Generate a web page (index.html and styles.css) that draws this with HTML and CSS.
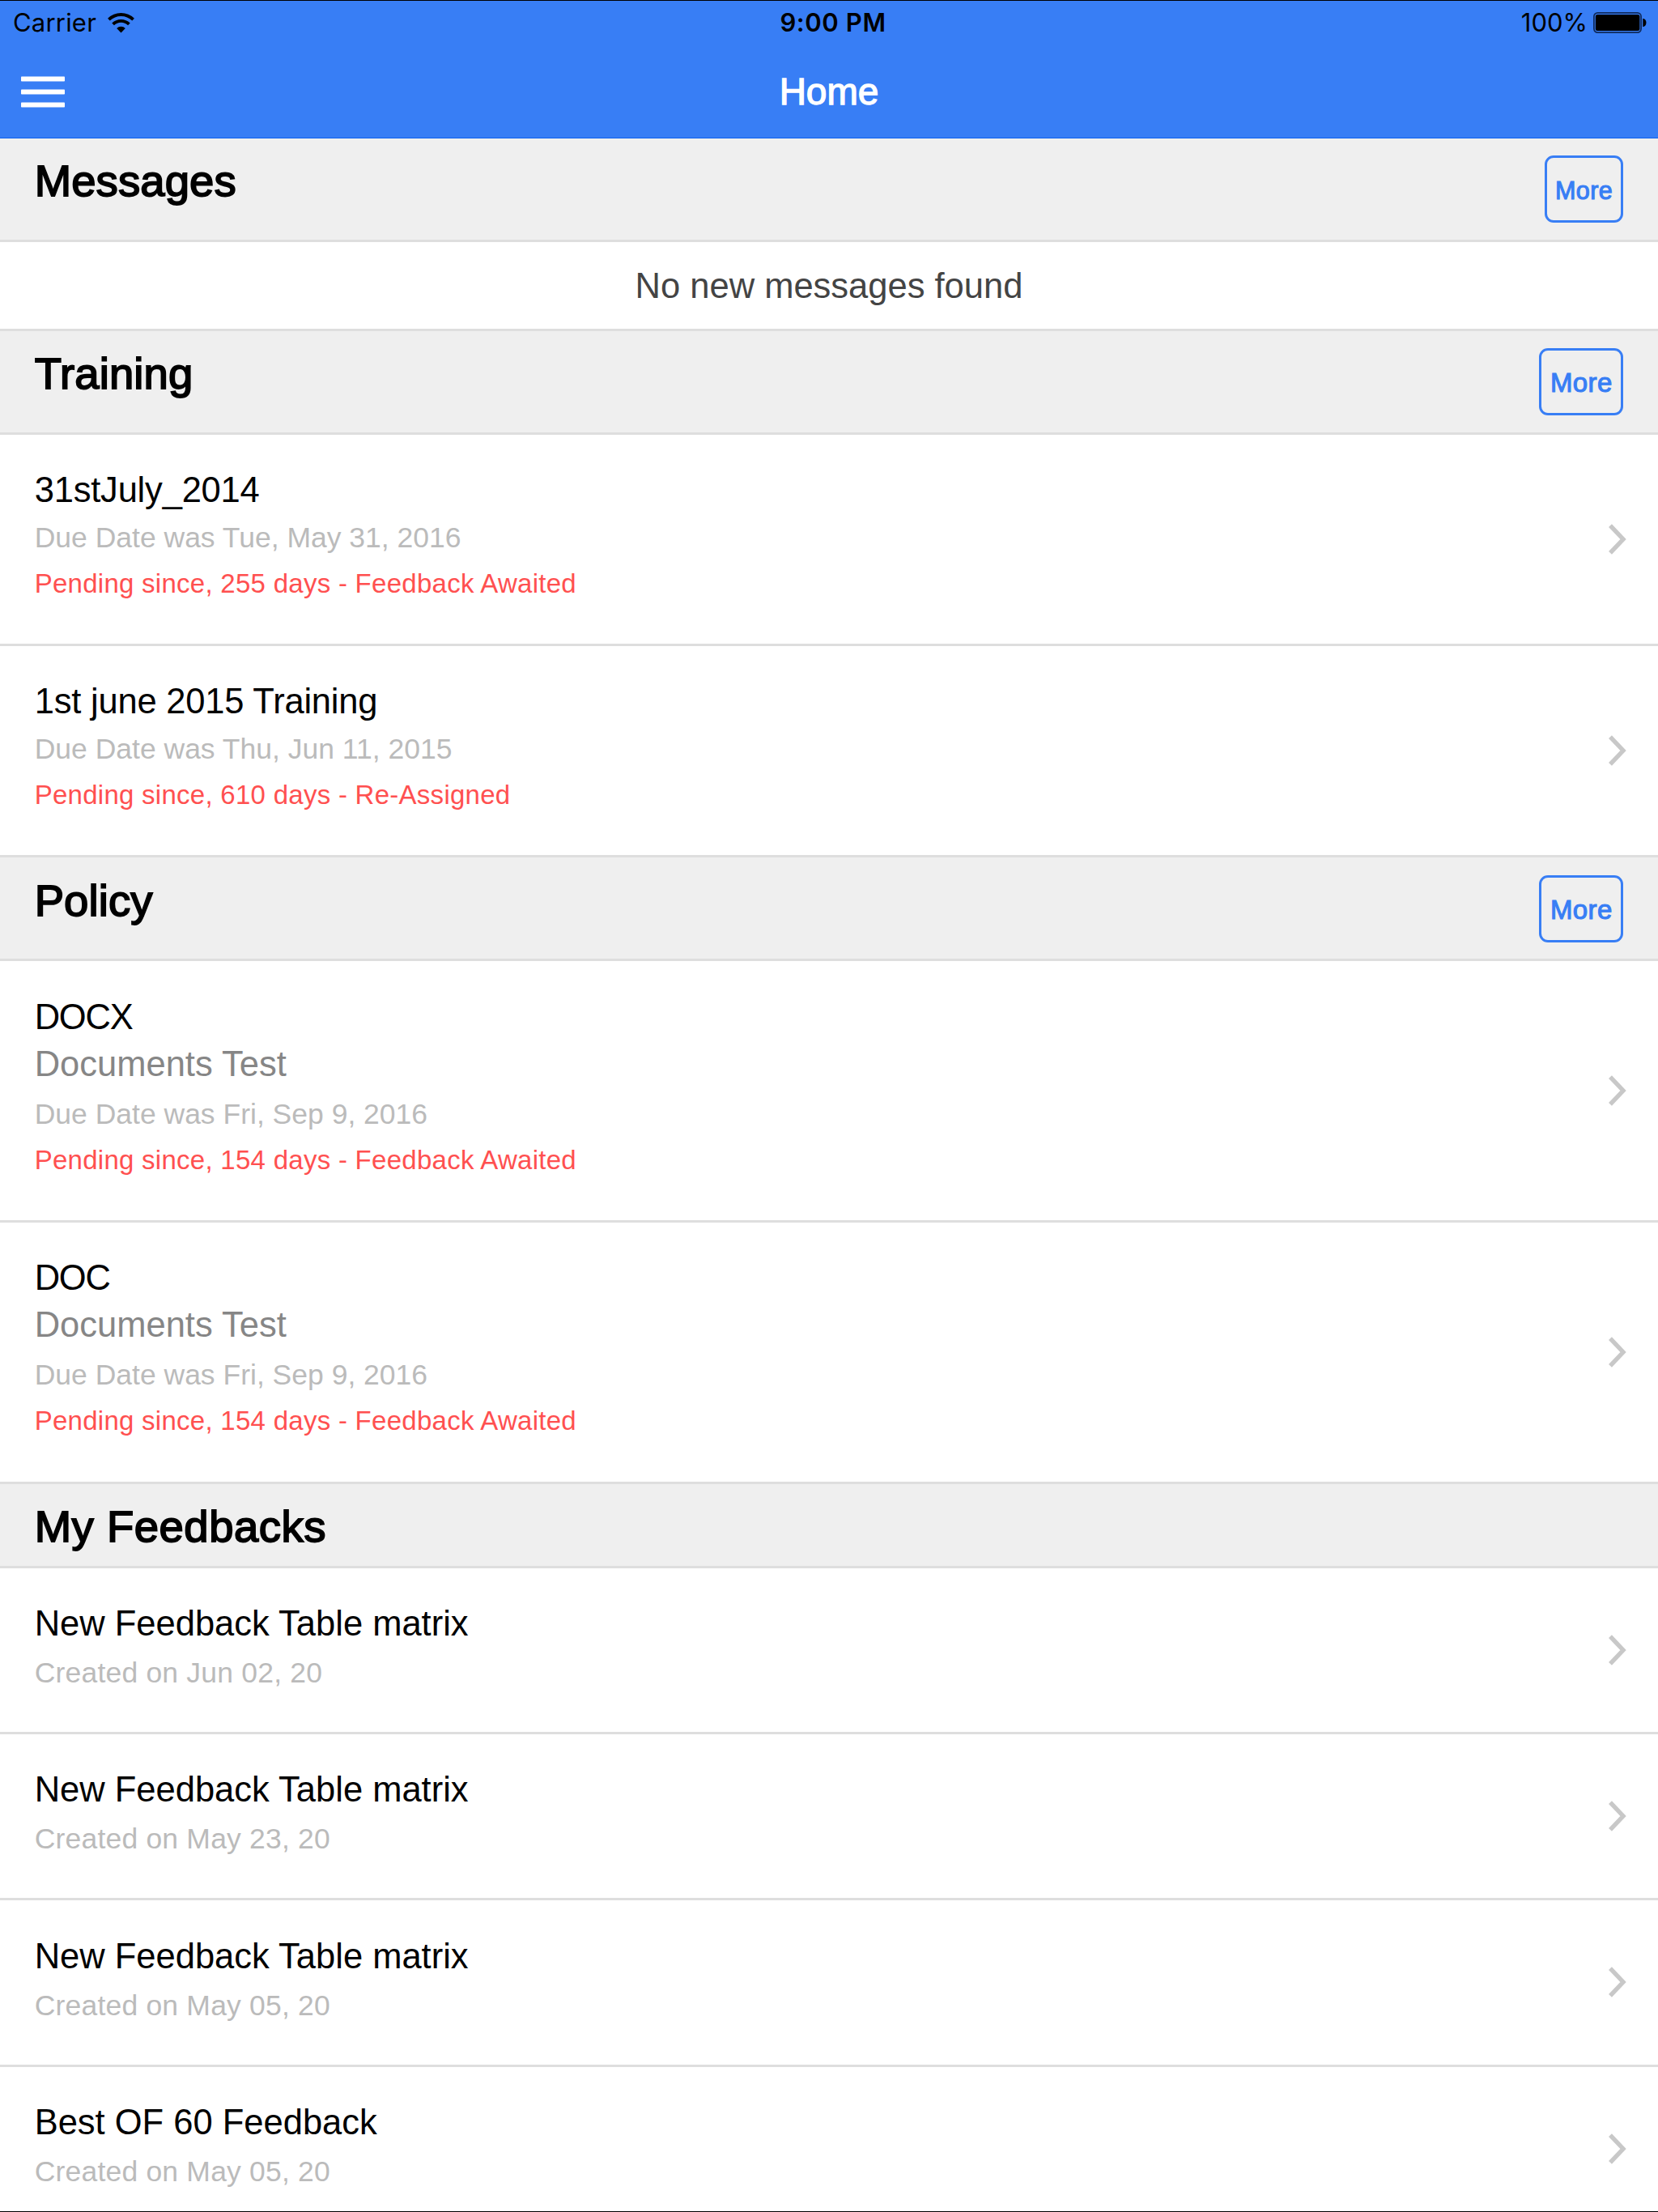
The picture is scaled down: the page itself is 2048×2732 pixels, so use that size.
FILE: index.html
```html
<!DOCTYPE html>
<html lang="en">
<head>
<meta charset="utf-8">
<title>Home</title>
<link rel="stylesheet" href="styles.css">
</head>
<body>
<svg class="defs" width="0" height="0">
  <symbol id="chevron" viewBox="0 0 22 38">
    <path d="M2 2.2 L18 19 L2 35.8" fill="none" stroke="#c8c8c8" stroke-width="5.4"/>
  </symbol>
</svg>

<header class="bar">
  <div class="status">
    <div class="status-left">
      <span>Carrier</span>
      <svg class="wifi" width="33" height="25" viewBox="0 0 33 25">
        <path d="M1.4 8.2 A21.5 21.5 0 0 1 31.6 8.2" fill="none" stroke="#000" stroke-width="3.8"/>
        <path d="M6.6 13.9 A14 14 0 0 1 26.4 13.9" fill="none" stroke="#000" stroke-width="3.8"/>
        <path d="M11.2 19 A7.4 7.4 0 0 1 21.8 19 L16.5 24.4 Z"/>
      </svg>
    </div>
    <div class="status-time">9:00 PM</div>
    <div class="status-right">
      <span>100%</span>
      <svg class="battery" width="66" height="26" viewBox="0 0 66 26">
        <rect x="0.9" y="0.9" width="58.2" height="24.2" rx="4.5" fill="none" stroke="#0f2a5c" stroke-width="1.7"/>
        <rect x="2.8" y="3" width="54.6" height="20" rx="2.5"/>
        <path d="M61.3 8 C66.8 8 66.8 18 61.3 18 Z"/>
      </svg>
    </div>
  </div>
  <div class="nav">
    <svg class="menu" width="54" height="39" viewBox="0 0 54 39" fill="#fff">
      <rect y="0.5" width="54" height="6" rx="0.8"/>
      <rect y="16.5" width="54" height="6" rx="0.8"/>
      <rect y="32.5" width="54" height="6" rx="0.8"/>
    </svg>
    <h1 class="title">Home</h1>
  </div>
</header>

<main class="list">
  <div class="divider">
    <h2>Messages</h2>
    <a class="button button-small">More</a>
  </div>
  <div class="item-empty">No new messages found</div>

  <div class="divider">
    <h2>Training</h2>
    <a class="button">More</a>
  </div>
  <div class="item item-training">
    <div>
      <h3>31stJuly_2014</h3>
      <p class="date">Due Date was Tue, May 31, 2016</p>
      <p class="pending">Pending since, 255 days - Feedback Awaited</p>
    </div>
    <svg class="chevron"><use href="#chevron"/></svg>
  </div>
  <div class="item item-training">
    <div>
      <h3>1st june 2015 Training</h3>
      <p class="date">Due Date was Thu, Jun 11, 2015</p>
      <p class="pending">Pending since, 610 days - Re-Assigned</p>
    </div>
    <svg class="chevron"><use href="#chevron"/></svg>
  </div>

  <div class="divider">
    <h2>Policy</h2>
    <a class="button">More</a>
  </div>
  <div class="item item-policy">
    <div>
      <h3>DOCX</h3>
      <p class="category">Documents Test</p>
      <p class="date">Due Date was Fri, Sep 9, 2016</p>
      <p class="pending">Pending since, 154 days - Feedback Awaited</p>
    </div>
    <svg class="chevron"><use href="#chevron"/></svg>
  </div>
  <div class="item item-policy">
    <div>
      <h3>DOC</h3>
      <p class="category">Documents Test</p>
      <p class="date">Due Date was Fri, Sep 9, 2016</p>
      <p class="pending">Pending since, 154 days - Feedback Awaited</p>
    </div>
    <svg class="chevron"><use href="#chevron"/></svg>
  </div>

  <div class="divider divider-plain">
    <h2>My Feedbacks</h2>
  </div>
  <div class="item item-feedback">
    <div>
      <h3>New Feedback Table matrix</h3>
      <p class="date">Created on Jun 02, 20</p>
    </div>
    <svg class="chevron"><use href="#chevron"/></svg>
  </div>
  <div class="item item-feedback">
    <div>
      <h3>New Feedback Table matrix</h3>
      <p class="date">Created on May 23, 20</p>
    </div>
    <svg class="chevron"><use href="#chevron"/></svg>
  </div>
  <div class="item item-feedback">
    <div>
      <h3>New Feedback Table matrix</h3>
      <p class="date">Created on May 05, 20</p>
    </div>
    <svg class="chevron"><use href="#chevron"/></svg>
  </div>
  <div class="item item-feedback">
    <div>
      <h3>Best OF 60 Feedback</h3>
      <p class="date">Created on May 05, 20</p>
    </div>
    <svg class="chevron"><use href="#chevron"/></svg>
  </div>
</main>
</body>
</html>
```
FILE: styles.css
```css
* {
    box-sizing: border-box;
}
body {
    display: flex;
    flex-direction: column;
    height: 2732px;
    margin: 0;
    overflow: hidden;
    background: #fff;
    color: #000;
    font-family: "Liberation Sans", Arial, sans-serif;
    border-bottom: 1px solid #000;
}
h1, h2, h3, p {
    margin: 0;
    font-weight: 400;
}
.defs {
    position: absolute;
}

/* header */
.bar {
    flex: none;
    height: 171px;
    background: #387ef5;
    border-top: 1px solid #000;
    border-bottom: 1px solid #0c60ee;
}
.status {
    display: grid;
    grid-template-columns: 1fr auto 1fr;
    height: 54px;
    padding: 0 14px 0 16px;
    font-family: Inter, sans-serif;
    font-size: 31px;
    line-height: 54px;
}
.status-left, .status-right {
    display: flex;
    align-items: center;
}
.status-left {
    letter-spacing: 0.2px;
}
.status-right {
    justify-content: flex-end;
}
.status-time {
    padding-left: 8px;
    font-weight: 600;
    letter-spacing: 0.6px;
}
.wifi {
    margin-left: 14px;
}
.battery {
    margin-left: 7px;
}
.nav {
    display: grid;
    grid-template-columns: 1fr auto 1fr;
    align-items: center;
    height: 115px;
    padding: 0 26px;
}
.menu {
    margin-top: 1px;
}
.title {
    color: #fff;
    font-size: 46px;
    -webkit-text-stroke: 1.3px #fff;
}

/* list */
.list {
    flex: 1;
    min-height: 0;
    overflow: hidden;
}
.divider {
    display: flex;
    justify-content: space-between;
    align-items: flex-start;
    height: 128px;
    padding: 21.33px 42.67px 0;
    background: #efefef;
    border-bottom: 3px solid #dedede;
}
.divider h2 {
    padding-top: 2px;
    font-size: 54.5px;
    line-height: 60px;
    letter-spacing: 0.1px;
    -webkit-text-stroke: 1.8px #000;
}
.divider-plain {
    height: 104px;
}
.divider-plain h2 {
    letter-spacing: 0.5px;
}
.button {
    width: 104px;
    height: 83px;
    border: 3px solid #387ef5;
    border-radius: 11px;
    color: #387ef5;
    font-size: 33px;
    line-height: 80px;
    letter-spacing: 0.4px;
    text-align: center;
    -webkit-text-stroke: 1.1px #387ef5;
}
.button-small {
    width: 97.5px;
    font-size: 30.5px;
}
.item-empty {
    height: 109.67px;
    border-bottom: 3px solid #dedede;
    color: #444;
    font-size: 43.5px;
    line-height: 109px;
    text-align: center;
}
.item {
    display: flex;
    justify-content: space-between;
    height: 261.33px;
    padding: 40.5px 39px 0 42.67px;
    border-bottom: 3px solid #dedede;
}
.item-policy {
    height: 322.67px;
}
.item-feedback {
    height: 205.33px;
}
.item h3 {
    font-size: 43.5px;
    line-height: 56px;
}
.item-training h3 {
    letter-spacing: -0.2px;
}
.item-policy h3 {
    letter-spacing: -1.2px;
}
.category {
    color: #868686;
    font-size: 43.5px;
    line-height: 61px;
}
.date {
    color: #bbb;
    font-size: 35.5px;
    line-height: 62px;
}
.item-feedback .date {
    line-height: 66px;
    letter-spacing: 0.2px;
}
.pending {
    color: #ff5050;
    font-size: 33px;
    line-height: 52px;
    letter-spacing: 0.27px;
}
.chevron {
    align-self: center;
    width: 22px;
    height: 38px;
    margin-top: -40.5px;
}
```
